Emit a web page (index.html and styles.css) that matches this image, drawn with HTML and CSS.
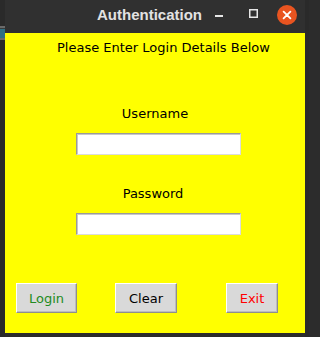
FILE: index.html
```html
<!DOCTYPE html>
<html>
<head>
<meta charset="utf-8">
<title>Authentication</title>
<link rel="stylesheet" href="styles.css">
</head>
<body>
<div class="screen">
  <div class="desk">
    <div class="desk-gap"></div>
    <div class="desk-line"></div>
    <div class="desk-dark"></div>
    <div class="desk-teal"></div>
    <div class="desk-line"></div>
  </div>
  <div class="window">
    <div class="titlebar">
      <span class="title">Authentication</span>
      <div class="controls">
        <svg class="ic-min" width="8" height="2" viewBox="0 0 8 2"><rect width="8" height="2" fill="#e6e6e6"/></svg>
        <svg class="ic-max" width="9" height="9" viewBox="0 0 9 9"><rect x="0.75" y="0.75" width="7.5" height="7.5" fill="none" stroke="#e6e6e6" stroke-width="1.5"/></svg>
        <svg class="ic-close" width="20" height="20" viewBox="0 0 20 20"><circle cx="10" cy="10" r="10" fill="#e95420"/><path d="M6.6 6.6l6.8 6.8M13.4 6.6l-6.8 6.8" stroke="#ffffff" stroke-width="1.8" stroke-linecap="round"/></svg>
      </div>
    </div>
    <div class="client">
      <div class="heading">Please Enter Login Details Below</div>
      <div class="label label-user">Username</div>
      <input class="entry" type="text">
      <div class="label label-pass">Password</div>
      <input class="entry" type="password">
      <div class="buttons">
        <button class="btn btn-login">Login</button>
        <button class="btn btn-clear">Clear</button>
        <button class="btn btn-exit">Exit</button>
      </div>
    </div>
  </div>
  <div class="edge"></div>
</div>
</body>
</html>
```
FILE: styles.css
```css
html, body {
  margin: 0;
  padding: 0;
  background: #2c2c2c;
}
body {
  width: 309px;
  height: 337px;
  overflow: hidden;
  font-family: "DejaVu Sans", sans-serif;
}
.screen {
  display: flex;
  height: 337px;
}
.desk {
  width: 5px;
  background: #2a2a2a;
  display: flex;
  flex-direction: column;
}
.desk-gap { height: 26px; }
.desk-line { height: 2px; background: #6a6a6a; }
.desk-dark { height: 1px; background: #3a3a3a; }
.desk-teal { height: 9px; background: #2f6f82; }
.window {
  width: 300px;
  display: flex;
  flex-direction: column;
}
.edge {
  width: 4px;
  background: #2a2a2a;
}
.titlebar {
  height: 33px;
  background: #303030;
  display: flex;
  align-items: flex-start;
}
.title {
  margin-left: 92px;
  margin-top: 6px;
  line-height: 18px;
  font-family: "Liberation Sans", Arial, sans-serif;
  font-weight: bold;
  font-size: 15px;
  color: #e2e2e2;
}
.controls {
  margin-left: auto;
  padding-right: 8px;
  display: flex;
  align-items: flex-start;
}
.ic-min { display: block; margin-top: 15px; }
.ic-max { display: block; margin-top: 9px; margin-left: 26px; }
.ic-close { display: block; margin-top: 5px; margin-left: 19px; }
.client {
  height: 300px;
  background: #ffff00;
  display: flex;
  flex-direction: column;
  font-size: 13px;
  color: #000;
}
.heading {
  margin-top: 7px;
  padding-left: 52px;
  line-height: 16px;
}
.label {
  line-height: 16px;
  text-align: center;
}
.label-user { margin-top: 50px; }
.label-pass { margin-top: 31px; padding-right: 4px; }
.entry {
  box-sizing: border-box;
  margin: 11px 0 0 71px;
  width: 165px;
  height: 22px;
  padding: 0;
  background: #ffffff;
  border: 1px solid;
  border-color: #9a9a9a #dcdcdc #dcdcdc #9a9a9a;
  box-shadow: inset 1px 1px 0 #c8c8c8;
  outline: none;
}
.buttons {
  margin-top: 48px;
  display: flex;
}
.btn {
  box-sizing: border-box;
  height: 30px;
  padding: 0;
  font-family: "DejaVu Sans", sans-serif;
  font-size: 13px;
  background: #d9d9d9;
  border: 1px solid;
  border-color: #ffffff #8e8e8e #8e8e8e #ffffff;
  box-shadow: inset -1px -1px 0 #bdbdbd;
}
.btn-login { margin-left: 11px; width: 61px; color: #228b22; }
.btn-clear { margin-left: 38px; width: 62px; color: #000000; }
.btn-exit { margin-left: 49px; width: 52px; color: #ff0000; }
```
